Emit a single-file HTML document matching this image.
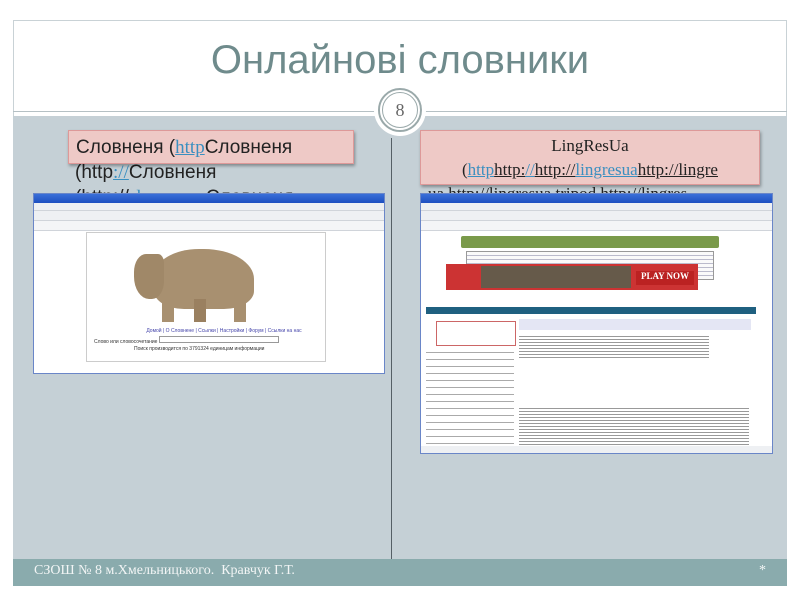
<!DOCTYPE html>
<html><head><meta charset="utf-8"><style>
*{margin:0;padding:0;box-sizing:border-box}
body{width:800px;height:600px;background:#fff;position:relative;overflow:hidden;font-family:"Liberation Sans",sans-serif}
.a{position:absolute}
.frame{left:13px;top:20px;width:774px;height:566px;border:1px solid #c9d2d6;background:#fff}
.title{left:0;width:800px;top:38px;text-align:center;font-size:40px;color:#6f8b8c;font-family:"Liberation Sans Narrow","Liberation Sans",sans-serif}
.line{left:13px;width:774px;top:111px;height:1px;background:#b5c0c4}
.content{left:13px;top:116px;width:774px;height:443px;background:#c5d0d6}
.foot{left:13px;top:559px;width:774px;height:27px;background:#8aabad;color:#f2f5f5;font-family:"Liberation Serif",serif;font-size:14px}
.vdiv{left:391px;top:138px;width:1px;height:421px;background:#555f66}
.circ{left:378px;top:88px;width:44px;height:44px;border-radius:50%;background:#fff;border:2px solid #9aa9aa;box-shadow:0 0 0 4px #fff}
.circ2{left:382px;top:92px;width:36px;height:36px;border-radius:50%;border:1px solid #9aa9aa;text-align:center;line-height:34px;font-family:"Liberation Serif",serif;font-size:18px;color:#666}
.pink{background:#eec9c6;border:1px solid #d99;box-shadow:1px 2px 3px rgba(0,0,0,.35)}
.t{font-size:19px;color:#222;font-family:"Liberation Sans Narrow","Liberation Sans",sans-serif}
.u{color:#3a8fc0;text-decoration:underline;font-family:"Liberation Serif",serif}
.shot{background:#fff;border:1px solid #6a86c8;overflow:hidden}
.tb{height:9px;background:linear-gradient(#3a6fd8,#1d4fc0)}
.tool{height:8px;background:#eef0f3;border-bottom:1px solid #d0d4da}
</style></head><body>
<div class="a frame"></div>
<div class="a title">Онлайнові словники</div>
<div class="a line"></div>
<div class="a content"></div>
<div class="a vdiv"></div>
<div class="a circ"></div>
<div class="a circ2">8</div>

<div class="a t" style="left:75px;top:160px;line-height:25px">(http<span class="u">://</span>Словненя<br>(http://<span class="u">slovnenya</span>Словненя</div>
<div class="a pink t" style="left:68px;top:130px;width:286px;height:34px;padding:4px 7px;line-height:25px">Словненя (<span class="u">http</span>Словненя</div>

<div class="a t" style="left:428px;top:184px;font-family:'Liberation Serif',serif;font-size:17px">ua.http://lingresua.tripod.http://lingres</div>
<div class="a pink" style="left:420px;top:130px;width:340px;height:55px;font-family:'Liberation Serif',serif;font-size:17px;color:#222;text-align:center;line-height:24px;padding-top:3px;white-space:nowrap;overflow:hidden">LingResUa<br>(<span class="u">http</span><u>http:</u><span class="u">//</span><u>http://</u><span class="u">lingresua</span><u>http://lingre</u></div>

<div class="a shot" style="left:33px;top:193px;width:352px;height:181px">
 <div class="tb"></div><div class="tool"></div><div class="tool" style="height:10px"></div><div class="tool" style="height:10px;background:#f4f5f7"></div>
 <div class="a" style="left:52px;top:38px;width:240px;height:130px;border:1px solid #ccc"></div>
 <div class="a" style="left:120px;top:55px;width:100px;height:60px;background:#a89070;border-radius:45% 50% 30% 30%"></div>
 <div class="a" style="left:128px;top:100px;width:12px;height:28px;background:#a89070"></div>
 <div class="a" style="left:200px;top:100px;width:12px;height:28px;background:#a89070"></div>
 <div class="a" style="left:160px;top:105px;width:12px;height:23px;background:#9a8060"></div>
 <div class="a" style="left:100px;top:60px;width:30px;height:45px;background:#a08868;border-radius:40% 20% 40% 50%"></div>
 <div class="a" style="left:90px;top:134px;font-size:5px;color:#44a;width:200px;text-align:center">Домой | О Словнене | Ссылки | Настройки | Форум | Ссылки на нас</div>
 <div class="a" style="left:60px;top:142px;font-size:5px;color:#333">Слово или словосочетание <span style="display:inline-block;width:120px;height:7px;border:1px solid #999"></span></div>
 <div class="a" style="left:100px;top:152px;font-size:5px;color:#333">Поиск производится по 3791324 единицам информации</div>
</div>

<div class="a shot" style="left:420px;top:193px;width:353px;height:261px">
 <div class="tb"></div><div class="tool"></div><div class="tool" style="height:10px"></div><div class="tool" style="height:10px;background:#f4f5f7"></div>
 <div class="a" style="left:40px;top:42px;width:258px;height:12px;background:#7a9a4a;border-radius:2px"></div>
 <div class="a" style="left:45px;top:57px;width:248px;height:29px;border:1px solid #999;background:repeating-linear-gradient(#fafafa 0 3px,#bbc 3px 4px)"></div>
 <div class="a" style="left:25px;top:70px;width:252px;height:26px;background:#c33"></div>
 <div class="a" style="left:60px;top:72px;width:150px;height:22px;background:#665a4a"></div>
 <div class="a" style="left:215px;top:77px;width:58px;height:14px;background:#b22;color:#fff;font-size:9px;font-weight:bold;font-family:'Liberation Serif',serif;text-align:center">PLAY NOW</div>
 <div class="a" style="left:5px;top:113px;width:330px;height:7px;background:#1f6080"></div>
 <div class="a" style="left:98px;top:125px;width:232px;height:11px;background:#e4e6f4"></div>
 <div class="a" style="left:15px;top:127px;width:80px;height:25px;border:1px solid #c66"></div>
 <div class="a" style="left:98px;top:140px;width:190px;height:24px;background:repeating-linear-gradient(#fff 0 2px,#999 2px 3px)"></div>
 <div class="a" style="left:5px;top:155px;width:88px;height:100px;background:repeating-linear-gradient(#fff 0 3px,#aaa 3px 4px,#fff 4px 7px)"></div>
 <div class="a" style="left:98px;top:212px;width:230px;height:45px;background:repeating-linear-gradient(#fff 0 2px,#999 2px 3px)"></div>
 <div class="a" style="left:0;top:252px;width:353px;height:9px;background:#eef0f3"></div>
</div>

<div class="a foot" style="padding:4px 21px">СЗОШ № 8 м.Хмельницького.&nbsp; Кравчук Г.Т.<span style="float:right">*</span></div>
</body></html>
